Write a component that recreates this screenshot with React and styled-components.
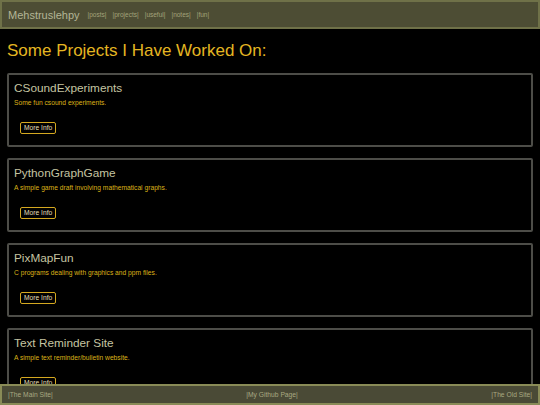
import React from 'react';
import styled, { createGlobalStyle } from 'styled-components';

const GlobalStyle = createGlobalStyle`
  *, *::before, *::after {
    box-sizing: border-box;
  }
  html, body {
    margin: 0;
    padding: 0;
    background: #000;
    font-family: "Liberation Sans", Arial, sans-serif;
  }
`;

const Page = styled.div`
  min-height: 100vh;
  padding-bottom: 30px;
`;

const Header = styled.header`
  display: flex;
  align-items: center;
  gap: 8px;
  height: 29px;
  padding: 0 6px;
  background: #4d4d34;
  border: 2px solid #6f7148;
`;

const SiteTitle = styled.span`
  font-size: 11px;
  color: #b3b596;
`;

const Nav = styled.nav`
  display: flex;
  gap: 6px;
`;

const NavLink = styled.a`
  font-size: 6.5px;
  color: #a3a37a;
  text-decoration: none;
`;

const Heading = styled.h1`
  margin: 12px 7px 12px;
  font-size: 17px;
  font-weight: normal;
  color: #e4b622;
`;

const List = styled.div`
  display: flex;
  flex-direction: column;
  gap: 11px;
  padding: 0 7px;
`;

const Card = styled.section`
  height: 74px;
  padding: 6px 5px 0;
  border: 2px solid #4d4d48;
  border-radius: 2px;
`;

const CardTitle = styled.h2`
  margin: 0;
  font-size: 11.8px;
  font-weight: normal;
  color: #c5c4a2;
`;

const CardText = styled.p`
  margin: 4px 0 0;
  font-size: 6.7px;
  color: #dcb318;
`;

const Button = styled.button`
  margin: 16px 0 0 6px;
  height: 12px;
  padding: 0 3px;
  background: #000;
  border: 1px solid #d4a820;
  border-radius: 2px;
  font-family: inherit;
  font-size: 6.7px;
  color: #e6dfb6;
  line-height: 10px;
`;

const Footer = styled.footer`
  position: fixed;
  left: 0;
  right: 0;
  bottom: 0;
  display: flex;
  justify-content: space-between;
  align-items: center;
  height: 21px;
  padding: 0 6px;
  background: #4a4a36;
  border: 2px solid #898b57;
`;

const FooterLink = styled.a`
  font-size: 6.7px;
  color: #a9a982;
  text-decoration: none;
`;

const projects = [
  { name: 'CSoundExperiments', text: 'Some fun csound experiments.' },
  { name: 'PythonGraphGame', text: 'A simple game draft involving mathematical graphs.' },
  { name: 'PixMapFun', text: 'C programs dealing with graphics and ppm files.' },
  { name: 'Text Reminder Site', text: 'A simple text reminder/bulletin website.' },
];

const App = () => (
  <>
    <GlobalStyle />
    <Page>
      <Header>
        <SiteTitle>Mehstruslehpy</SiteTitle>
        <Nav>
          {['posts', 'projects', 'useful', 'notes', 'fun'].map((n) => (
            <NavLink key={n} href="#">|{n}|</NavLink>
          ))}
        </Nav>
      </Header>
      <Heading>Some Projects I Have Worked On:</Heading>
      <List>
        {projects.map((p) => (
          <Card key={p.name}>
            <CardTitle>{p.name}</CardTitle>
            <CardText>{p.text}</CardText>
            <Button>More Info</Button>
          </Card>
        ))}
      </List>
      <Footer>
        <FooterLink href="#">|The Main Site|</FooterLink>
        <FooterLink href="#">|My Github Page|</FooterLink>
        <FooterLink href="#">|The Old Site|</FooterLink>
      </Footer>
    </Page>
  </>
);

export default App;
